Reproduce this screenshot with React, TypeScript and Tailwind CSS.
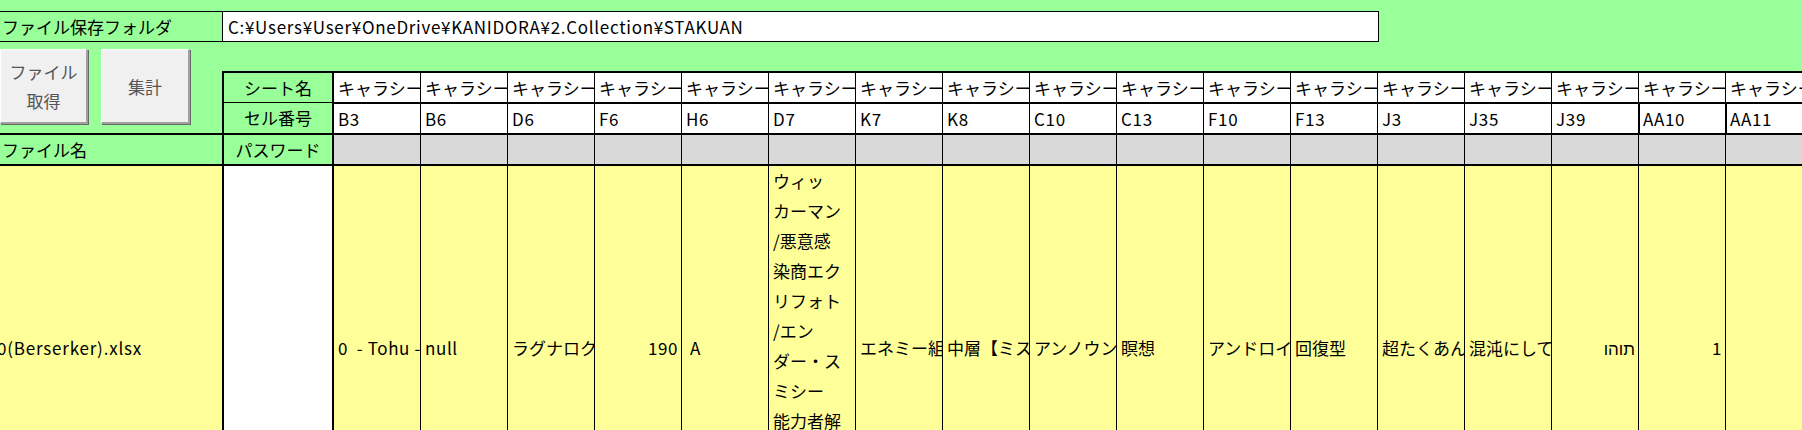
import React from "react";

const cols = [
  "B3", "B6", "D6", "F6", "H6", "D7", "K7", "K8", "C10",
  "C13", "F10", "F13", "J3", "J35", "J39", "AA10", "AA11",
];

type DataCell = {
  text?: string;
  lines?: string[];
  align?: "left" | "right";
  pad?: string;
  latin?: boolean;
};

const rowData: DataCell[] = [
  { text: "0  - Tohu - Bohu", latin: true },
  { text: "null", latin: true },
  { text: "ラグナロク" },
  { text: "190", align: "right", latin: true },
  { text: "A", pad: "pl-[8px]", latin: true },
  {
    lines: [
      "ウィッ",
      "カーマン",
      "/悪意感",
      "染商エク",
      "リフォト",
      "/エン",
      "ダー・ス",
      "ミシー",
      "能力者解",
      "放戦線",
    ],
  },
  { text: "エネミー組織" },
  { text: "中層【ミスト】" },
  { text: "アンノウン" },
  { text: "瞑想" },
  { text: "アンドロイド" },
  { text: "回復型" },
  { text: "超たくあん" },
  { text: "混沌にして" },
  { text: "תוהו", align: "right" },
  { text: "1", align: "right", latin: true },
  { text: "" },
];

const Button = ({ lines, w }: { lines: string[]; w: string }) => (
  <div
    className={`${w} h-[75px] bg-[#f0f0f0] border-t border-l border-t-white border-l-white 
    border-r-2 border-b-2 border-r-[#a0a0a0] border-b-[#a0a0a0] shadow-[1px_1px_0_#696969] 
    text-[#555] leading-[29px] flex flex-col items-center justify-center shrink-0`}
  >
    {lines.map((l) => (
      <span key={l}>{l}</span>
    ))}
  </div>
);

export default function App() {
  return (
    <div className="w-[1802px] h-[430px] overflow-hidden bg-[#99ff99] text-[17px] text-black font-['Noto_Sans_CJK_JP','Noto_Sans',sans-serif]">
      {/* folder row */}
      <div className="pt-[11px]">
        <div className="flex h-[31px] w-[1379px] border-y border-black">
          <div className="w-[223px] shrink-0 border-r border-black pl-[2px] flex items-center whitespace-nowrap">
            ファイル保存フォルダ
          </div>
          <div className="flex-1 bg-white border-r border-black pl-[5px] flex items-center whitespace-nowrap tracking-[0.7px]">
            C:¥Users¥User¥OneDrive¥KANIDORA¥2.Collection¥STAKUAN
          </div>
        </div>
      </div>

      {/* buttons + header rows */}
      <div className="flex h-[91px]">
        <div className="w-[222px] shrink-0 pt-[7px] flex items-start gap-[13px]">
          <Button lines={["ファイル", "取得"]} w="w-[88px]" />
          <Button lines={["集計"]} w="w-[89px]" />
        </div>
        <div className="flex flex-col pt-[29px]">
          <div className="flex h-[31px]">
            <div className="w-[112px] shrink-0 border-t-2 border-x-2 border-black flex items-center justify-center">
              シート名
            </div>
            {cols.map((c) => (
              <div
                key={c}
                className="w-[87px] shrink-0 bg-white border-t-2 border-r border-black pl-[4px] flex items-center overflow-hidden whitespace-nowrap"
              >
                キャラシート
              </div>
            ))}
          </div>
          <div className="flex h-[31px]">
            <div className="w-[112px] shrink-0 border-t border-x-2 border-black flex items-center justify-center">
              セル番号
            </div>
            {cols.map((c) => (
              <div
                key={c}
                className={`w-[87px] shrink-0 bg-white border-t-2 border-r border-black pl-[4px] flex items-center overflow-hidden whitespace-nowrap tracking-[0.7px] ${
                  c.startsWith("AA") ? "shadow-[inset_1px_0_0_#000]" : ""
                }`}
              >
                {c}
              </div>
            ))}
          </div>
        </div>
      </div>

      {/* password row */}
      <div className="flex h-[31px] border-t-2 border-black">
        <div className="w-[222px] shrink-0 pl-[2px] flex items-center whitespace-nowrap">
          ファイル名
        </div>
        <div className="w-[112px] shrink-0 border-x-2 border-black flex items-center justify-center">
          パスワード
        </div>
        {cols.map((c) => (
          <div key={c} className="w-[87px] shrink-0 bg-[#d9d9d9] border-r border-black" />
        ))}
      </div>

      {/* data row */}
      <div className="flex h-[366px] border-t-2 border-black bg-[#ffff99]">
        <div className="w-[222px] shrink-0 overflow-hidden flex items-center whitespace-nowrap tracking-[0.8px]">
          <span className="-ml-[3px]">0(Berserker).xlsx</span>
        </div>
        <div className="w-[112px] shrink-0 bg-white border-x-2 border-black" />
        {rowData.map((d, i) =>
          d.lines ? (
            <div
              key={i}
              className="w-[87px] shrink-0 border-r border-black pl-[4px] flex flex-col leading-[30px] overflow-hidden whitespace-nowrap"
            >
              {d.lines.map((l) => (
                <span key={l}>{l}</span>
              ))}
            </div>
          ) : (
            <div
              key={i}
              className={`w-[87px] shrink-0 border-r border-black flex items-center overflow-hidden whitespace-pre ${
                d.align === "right" ? "justify-end pr-[3px]" : d.pad ?? "pl-[4px]"
              } ${d.latin ? "tracking-[0.6px]" : ""}`}
            >
              {d.text}
            </div>
          ),
        )}
      </div>
    </div>
  );
}
